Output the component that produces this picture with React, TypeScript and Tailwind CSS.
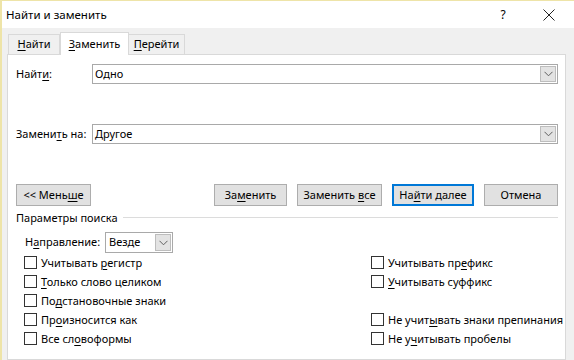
import React from "react";

const U = ({ c }: { c: string }) => (
  <span className="underline underline-offset-[2px] decoration-[1px]">{c}</span>
);

const Chevron = () => (
  <svg width="9" height="6" viewBox="0 0 9 6" fill="none">
    <path d="M0.5 0.8 L4.5 4.8 L8.5 0.8" stroke="#606060" strokeWidth="1" />
  </svg>
);

function Combo({ value, w }: { value: string; w: string }) {
  return (
    <div className={`${w} h-[20px] border border-[#a9a9a9] bg-white flex items-stretch`}>
      <div className="flex-1 pl-[2px] flex items-center text-[11px] text-black">{value}</div>
      <div className="w-[16px] my-[1px] mr-[1px] bg-[#e3e3e3] border border-[#bdbdbd] flex items-center justify-center">
        <Chevron />
      </div>
    </div>
  );
}

function Btn({ children, w, focused }: { children: React.ReactNode; w: string; focused?: boolean }) {
  return (
    <div
      className={`${w} h-[22px] flex items-center justify-center bg-[#e1e1e1] text-[11px] text-black ${
        focused ? "border-2 border-[#0078d7]" : "border border-[#adadad]"
      }`}
    >
      <span className="whitespace-nowrap">{children}</span>
    </div>
  );
}

function Check({ children }: { children: React.ReactNode }) {
  return (
    <div className="h-[19px] flex items-center">
      <div className="w-[13px] h-[13px] border border-[#333333] bg-white shrink-0" />
      <div className="ml-[4px] text-[11px] text-black leading-none whitespace-nowrap">{children}</div>
    </div>
  );
}

export default function App() {
  return (
    <div
      className="w-[574px] h-[360px] overflow-hidden flex flex-col border-t border-l-2 border-[#eee4a8] bg-[#f0f0f0] text-black"
      style={{ fontFamily: '"Noto Sans", "Segoe UI", sans-serif' }}
    >
      {/* Title bar */}
      <div className="h-[27px] bg-white flex items-center shrink-0">
        <div className="pl-[4px] text-[11.5px] flex-1">Найти и заменить</div>
        <div className="w-[20px] text-[12px] text-center">?</div>
        <div className="w-[26px]" />
        <div className="w-[20px] flex items-center justify-center">
          <svg width="12" height="12" viewBox="0 0 12 12">
            <path d="M0.5 0.5 L11.5 11.5 M11.5 0.5 L0.5 11.5" stroke="#222" strokeWidth="1" />
          </svg>
        </div>
        <div className="w-[15px]" />
      </div>

      {/* Body */}
      <div className="flex-1 flex flex-col pl-[5px] pr-[8px]">
        {/* Tabs */}
        <div className="h-[26px] flex items-end pl-[1px] shrink-0">
          <div className="w-[52px] h-[20px] border border-b-0 border-[#d9d9d9] bg-[#f0f0f0] flex items-center justify-center text-[11px]">
            <span><U c="Н" />айти</span>
          </div>
          <div className="w-[69px] h-[23px] border border-b-0 border-[#d9d9d9] bg-white flex items-center justify-center text-[11px] -mb-px relative z-10">
            <span><U c="З" />аменить</span>
          </div>
          <div className="w-[56px] h-[20px] border border-b-0 border-l-0 border-[#d9d9d9] bg-[#f0f0f0] flex items-center justify-center text-[11px]">
            <span><U c="П" />ерейти</span>
          </div>
        </div>

        {/* Panel */}
        <div className="flex-1 bg-white border border-[#d9d9d9] pl-[8px] pr-[7px] flex flex-col">
          <div className="mt-[9px] flex items-center">
            <div className="w-[76px] text-[11px] whitespace-nowrap">Найт<U c="и" />:</div>
            <Combo value="Одно" w="w-[466px]" />
          </div>
          <div className="mt-[40px] flex items-center">
            <div className="w-[76px] text-[11px] whitespace-nowrap">Замени<U c="т" />ь на:</div>
            <Combo value="Другое" w="w-[466px]" />
          </div>

          <div className="mt-[40px] flex items-center justify-between">
            <Btn w="w-[75px]">&lt;&lt; Мень<U c="ш" />е</Btn>
            <div className="flex gap-[10px]">
              <Btn w="w-[73px]">За<U c="м" />енить</Btn>
              <Btn w="w-[85px]">Заменить <U c="в" />се</Btn>
              <Btn w="w-[82px]" focused>На<U c="й" />ти далее</Btn>
              <Btn w="w-[74px]">Отмена</Btn>
            </div>
          </div>

          <div className="mt-[4px] h-[14px] flex items-center">
            <div className="text-[11px] leading-none pr-[5px] whitespace-nowrap">Параметры поиска</div>
            <div className="flex-1 h-px bg-[#dcdcdc]" />
          </div>

          <div className="mt-[8px] pl-[9px] flex items-center">
            <div className="w-[80px] text-[11px] whitespace-nowrap">Н<U c="а" />правление:</div>
            <div className="w-[68px] h-[21px] border border-[#a9a9a9] flex items-stretch bg-white">
              <div className="flex-1 pl-[3px] flex items-center text-[11px]">Везде</div>
              <div className="w-[16px] my-[1px] mr-[1px] bg-[#e3e3e3] border border-[#bdbdbd] flex items-center justify-center">
                <Chevron />
              </div>
            </div>
          </div>

          <div className="pl-[8px] flex">
            <div className="w-[347px] shrink-0 flex flex-col">
              <Check>Учитывать <U c="р" />егистр</Check>
              <Check><U c="Т" />олько слово целиком</Check>
              <Check>По<U c="д" />становочные знаки</Check>
              <Check>Пр<U c="о" />износится как</Check>
              <Check>Все сл<U c="о" />воформы</Check>
            </div>
            <div className="shrink-0 flex flex-col">
              <Check>Учитывать пр<U c="е" />фикс</Check>
              <Check><U c="У" />читывать суффикс</Check>
              <div className="h-[19px]" />
              <Check>Не учит<U c="ы" />вать знаки препинания</Check>
              <Check>Не у<U c="ч" />итывать пробелы</Check>
            </div>
          </div>
        </div>
      </div>
    </div>
  );
}
